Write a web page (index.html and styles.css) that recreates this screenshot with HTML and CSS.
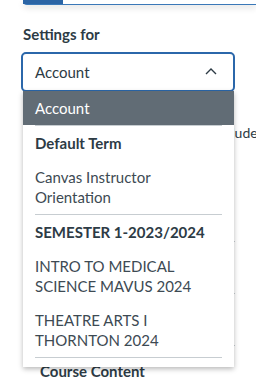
FILE: index.html
```html
<!DOCTYPE html>
<html lang="en">
<head>
  <meta charset="UTF-8" />
  <meta name="viewport" content="width=device-width, initial-scale=1.0"/>
  <title>Settings</title>
  <link rel="stylesheet" href="styles.css">
</head>
<body>

  <!-- tab strip -->
  <div class="tabs"><span class="tab-active"></span></div>

  <div class="settings">
    <div class="field-label">Settings for</div>

    <div class="select-wrap">
      <div class="select">
        <span>Account</span>
        <svg class="chevron" width="12" height="8" viewBox="0 0 12 8">
          <polyline points="1,7 6,2 11,7" fill="none" stroke="#2d3b45" stroke-width="1.4"/>
        </svg>
      </div>

      <!-- open dropdown -->
      <ul class="listbox">
        <li class="option active">Account</li>
        <li class="sep"></li>
        <li class="option group">Default Term</li>
        <li class="option">Canvas Instructor Orientation</li>
        <li class="sep"></li>
        <li class="option group">SEMESTER 1-2023/2024</li>
        <li class="option">INTRO TO MEDICAL SCIENCE MAVUS 2024</li>
        <li class="option">THEATRE ARTS I THORNTON 2024</li>
        <li class="sep"></li>
        <li class="option group">SEMESTER 2-2023/2024</li>
      </ul>
    </div>

    <p class="include">Include</p>

    <div class="rows">
      <div class="row"></div>
      <div class="row"></div>
    </div>

    <h3 class="section">Course Content</h3>
  </div>

</body>
</html>
```

FILE: styles.css
```css
body {
  margin: 0;
  font-family: 'Lato', 'Noto Sans', sans-serif;
  font-size: 14px;
  line-height: 19px;
  color: #2d3b45;
  background-color: #fff;
  overflow: hidden;
}
.tabs {
  margin-left: 23px;
  height: 4px;
  border-bottom: 1px solid #3a78b8;
  border-bottom-left-radius: 4px;
  box-shadow: 0 3px 6px rgba(0, 0, 0, 0.12);
}
.tab-active {
  display: block;
  width: 40px;
  height: 4px;
  background-color: #2a64a5;
}
.settings { padding: 0 21px; }
.field-label {
  margin: 20px 0 0 2px;
  font-size: 15px;
  font-weight: bold;
}
.select-wrap {
  position: relative;
  margin-top: 8px;
}
.select {
  height: 36px;
  border: 2px solid #2b67aa;
  border-radius: 5px;
  padding: 0 16px 0 12px;
  display: flex;
  align-items: center;
  justify-content: space-between;
  font-size: 15px;
}
.chevron { margin-top: -2px; }
.listbox {
  position: absolute;
  top: 39px;
  left: 2px;
  width: 211px;
  height: 276px;
  overflow: hidden;
  margin: 0;
  padding: 0;
  list-style: none;
  background-color: #fff;
  box-shadow: 0 2px 5px rgba(0, 0, 0, 0.28);
  z-index: 2;
}
.option {
  padding: 7px 12px;
  font-size: 15px;
  line-height: 20px;
  color: #3d4a53;
}
.option.active {
  background-color: #616c75;
  color: #fff;
}
.option.group {
  font-weight: bold;
  color: #2d3b45;
}
.sep {
  height: 1px;
  margin: 0 12px;
  background-color: #c7cdd1;
}
.include {
  margin: 31px 0 0;
  padding-left: 192px;
  white-space: nowrap;
}
.rows { margin: 99px 0 0 2px; }
.row {
  height: 51px;
  border-top: 1px solid #c7cdd1;
}
.row:last-child { border-bottom: 1px solid #c7cdd1; }
.section {
  margin: 15px 0 0 19px;
  font-size: 15px;
  line-height: 20px;
}
```
